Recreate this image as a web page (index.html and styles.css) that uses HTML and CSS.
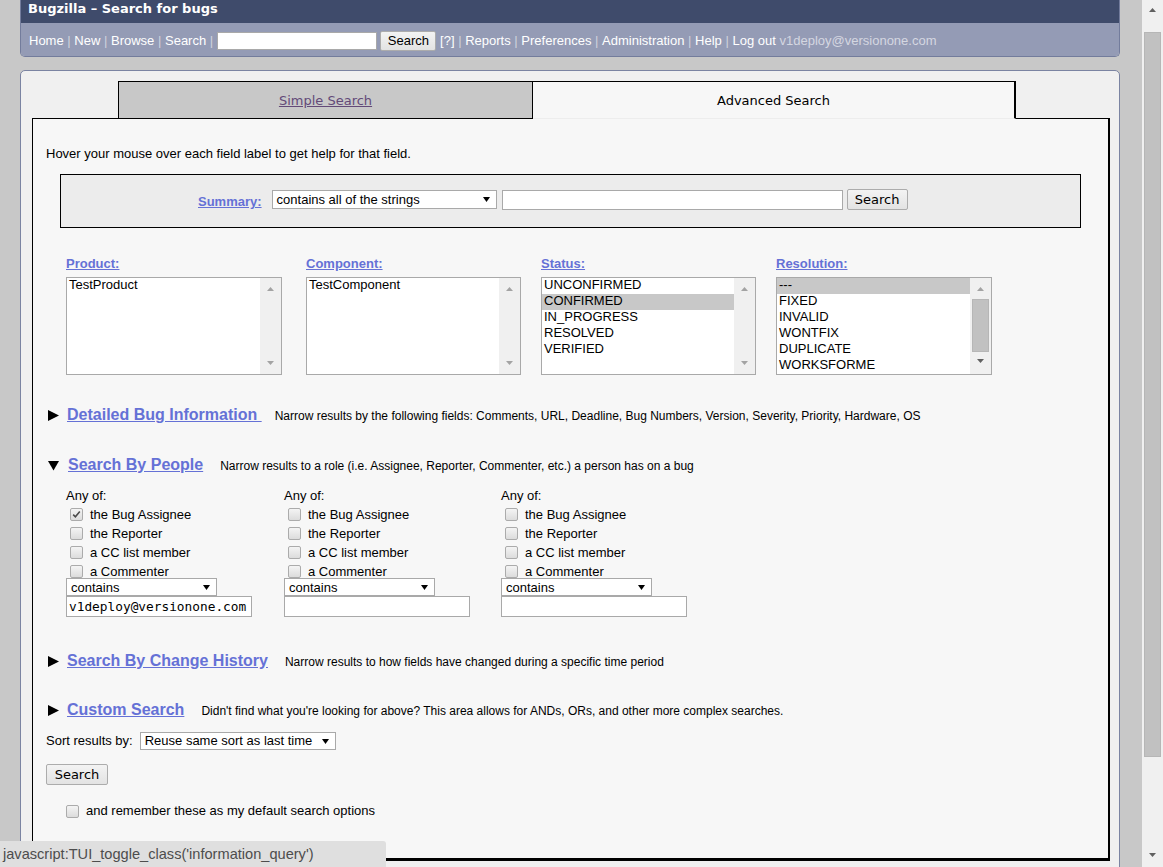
FILE: index.html
```html
<!DOCTYPE html>
<html lang="en">
<head>
<meta charset="utf-8">
<title>Bugzilla – Search for bugs</title>
<link rel="stylesheet" href="styles.css">
</head>
<body>
<div class="page">
  <div class="header">
    <div class="title">Bugzilla – Search for bugs</div>
    <div class="nav">
      <a class="nl">Home</a> <span class="sep">|</span> <a class="nl">New</a> <span class="sep">|</span> <a class="nl">Browse</a> <span class="sep">|</span> <a class="nl">Search</a> <span class="sep">|</span> <span class="nav-input"></span> <span class="btn nav-btn">Search</span> <a class="nl">[?]</a> <span class="sep">|</span> <a class="nl">Reports</a> <span class="sep">|</span> <a class="nl">Preferences</a> <span class="sep">|</span> <a class="nl">Administration</a> <span class="sep">|</span> <a class="nl">Help</a> <span class="sep">|</span> <a class="nl">Log out</a> <span class="email">v1deploy@versionone.com</span>
    </div>
  </div>

  <div class="panel">
    <div class="tabs">
      <div class="tab tab-simple"><a class="tab-link">Simple Search</a></div>
      <div class="tab tab-adv">Advanced Search</div>
    </div>
    <div class="content">
      <p class="intro">Hover your mouse over each field label to get help for that field.</p>

      <div class="summary-box">
        <a class="field-label">Summary:</a>
        <span class="select sel-summary">contains all of the strings<svg class="sel-arrow" width="7" height="5" viewBox="0 0 7 5"><path d="M0 0H7L3.5 5Z"/></svg></span>
        <span class="textbox tb-summary"></span>
        <span class="btn btn-v btn-summary">Search</span>
      </div>

      <div class="lists">
        <div class="list-col">
          <a class="field-label">Product:</a>
          <div class="listbox">
            <div class="options"><div class="opt">TestProduct</div></div>
            <div class="lsb">
              <svg class="lsb-arrow dis" width="7" height="4" viewBox="0 0 7 4"><path d="M0 4L3.5 0L7 4Z"/></svg>
              <svg class="lsb-arrow dis" width="7" height="4" viewBox="0 0 7 4"><path d="M0 0H7L3.5 4Z"/></svg>
            </div>
          </div>
        </div>
        <div class="list-col">
          <a class="field-label">Component:</a>
          <div class="listbox">
            <div class="options"><div class="opt">TestComponent</div></div>
            <div class="lsb">
              <svg class="lsb-arrow dis" width="7" height="4" viewBox="0 0 7 4"><path d="M0 4L3.5 0L7 4Z"/></svg>
              <svg class="lsb-arrow dis" width="7" height="4" viewBox="0 0 7 4"><path d="M0 0H7L3.5 4Z"/></svg>
            </div>
          </div>
        </div>
        <div class="list-col">
          <a class="field-label">Status:</a>
          <div class="listbox">
            <div class="options">
              <div class="opt">UNCONFIRMED</div>
              <div class="opt sel">CONFIRMED</div>
              <div class="opt">IN_PROGRESS</div>
              <div class="opt">RESOLVED</div>
              <div class="opt">VERIFIED</div>
            </div>
            <div class="lsb">
              <svg class="lsb-arrow dis" width="7" height="4" viewBox="0 0 7 4"><path d="M0 4L3.5 0L7 4Z"/></svg>
              <svg class="lsb-arrow dis" width="7" height="4" viewBox="0 0 7 4"><path d="M0 0H7L3.5 4Z"/></svg>
            </div>
          </div>
        </div>
        <div class="list-col">
          <a class="field-label">Resolution:</a>
          <div class="listbox">
            <div class="options">
              <div class="opt sel">---</div>
              <div class="opt">FIXED</div>
              <div class="opt">INVALID</div>
              <div class="opt">WONTFIX</div>
              <div class="opt">DUPLICATE</div>
              <div class="opt">WORKSFORME</div>
            </div>
            <div class="lsb lsb-active">
              <svg class="lsb-arrow dis" width="7" height="4" viewBox="0 0 7 4"><path d="M0 4L3.5 0L7 4Z"/></svg>
              <div class="lsb-thumb"></div>
              <svg class="lsb-arrow" width="7" height="4" viewBox="0 0 7 4"><path d="M0 0H7L3.5 4Z"/></svg>
            </div>
          </div>
        </div>
      </div>

      <div class="sec sec-detail">
        <svg class="tri" width="11" height="11" viewBox="0 0 11 11"><path d="M0 0L11 5.5L0 11Z"/></svg><a class="sec-link">Detailed Bug Information&nbsp;</a><span class="sec-desc d13">Narrow results by the following fields: Comments, URL, Deadline, Bug Numbers, Version, Severity, Priority, Hardware, OS</span>
      </div>

      <div class="sec sec-people">
        <svg class="tri tri-down" width="11" height="10" viewBox="0 0 11 10"><path d="M0 0H11L5.5 9.5Z"/></svg><a class="sec-link">Search By People</a><span class="sec-desc">Narrow results to a role (i.e. Assignee, Reporter, Commenter, etc.) a person has on a bug</span>
      </div>

      <div class="people">
        <div class="pcol">
          <div class="anyof">Any of:</div>
          <div class="cbrow"><span class="cb checked"><svg width="9" height="9" viewBox="0 0 9 9"><path d="M1.2 4.6L3.4 6.8L7.8 1.6" fill="none" stroke="#4a4a4a" stroke-width="1.6"/></svg></span>the Bug Assignee</div>
          <div class="cbrow"><span class="cb"></span>the Reporter</div>
          <div class="cbrow"><span class="cb"></span>a CC list member</div>
          <div class="cbrow"><span class="cb"></span>a Commenter</div>
          <span class="select sel-contains">contains<svg class="sel-arrow" width="7" height="5" viewBox="0 0 7 5"><path d="M0 0H7L3.5 5Z"/></svg></span>
          <span class="textbox tb-email">v1deploy@versionone.com</span>
        </div>
        <div class="pcol">
          <div class="anyof">Any of:</div>
          <div class="cbrow"><span class="cb"></span>the Bug Assignee</div>
          <div class="cbrow"><span class="cb"></span>the Reporter</div>
          <div class="cbrow"><span class="cb"></span>a CC list member</div>
          <div class="cbrow"><span class="cb"></span>a Commenter</div>
          <span class="select sel-contains">contains<svg class="sel-arrow" width="7" height="5" viewBox="0 0 7 5"><path d="M0 0H7L3.5 5Z"/></svg></span>
          <span class="textbox tb-email"></span>
        </div>
        <div class="pcol">
          <div class="anyof">Any of:</div>
          <div class="cbrow"><span class="cb"></span>the Bug Assignee</div>
          <div class="cbrow"><span class="cb"></span>the Reporter</div>
          <div class="cbrow"><span class="cb"></span>a CC list member</div>
          <div class="cbrow"><span class="cb"></span>a Commenter</div>
          <span class="select sel-contains">contains<svg class="sel-arrow" width="7" height="5" viewBox="0 0 7 5"><path d="M0 0H7L3.5 5Z"/></svg></span>
          <span class="textbox tb-email"></span>
        </div>
      </div>

      <div class="sec sec-history">
        <svg class="tri" width="11" height="11" viewBox="0 0 11 11"><path d="M0 0L11 5.5L0 11Z"/></svg><a class="sec-link">Search By Change History</a><span class="sec-desc">Narrow results to how fields have changed during a specific time period</span>
      </div>

      <div class="sec sec-custom">
        <svg class="tri" width="11" height="11" viewBox="0 0 11 11"><path d="M0 0L11 5.5L0 11Z"/></svg><a class="sec-link">Custom Search</a><span class="sec-desc">Didn't find what you're looking for above? This area allows for ANDs, ORs, and other more complex searches.</span>
      </div>

      <div class="sort-row">
        <span>Sort results by:</span>
        <span class="select sel-sort">Reuse same sort as last time<svg class="sel-arrow" width="7" height="5" viewBox="0 0 7 5"><path d="M0 0H7L3.5 5Z"/></svg></span>
      </div>

      <div class="submit-row"><span class="btn btn-v btn-bottom">Search</span></div>

      <div class="remember"><span class="cb"></span>and remember these as my default search options</div>
    </div>
  </div>
</div>

<div class="scrollbar">
  <svg class="sb-arrow" width="7" height="4" viewBox="0 0 7 4"><path d="M0 4L3.5 0L7 4Z"/></svg>
  <div class="sb-thumb"></div>
  <div class="sb-rest"></div>
  <svg class="sb-arrow" width="7" height="4" viewBox="0 0 7 4"><path d="M0 0H7L3.5 4Z"/></svg>
</div>

<div class="statusbar">javascript:TUI_toggle_class('information_query')</div>
</body>
</html>
```

FILE: styles.css
```css
* { box-sizing: border-box; }
html, body { margin: 0; height: 100%; }
body {
  display: flex;
  background: #c8c8c8;
  overflow: hidden;
  font-family: "Liberation Sans", Arial, sans-serif;
  font-size: 13px;
  color: #000;
}
.page { flex: 1; min-width: 0; padding: 0 22px 0 20px; }

/* header */
.header {
  border: 1px solid #737c9c;
  border-top: 0;
  border-radius: 0 0 5px 5px;
  overflow: hidden;
}
.title {
  height: 23px;
  background: #3f4b6b;
  color: #fff;
  font: bold 13px/18px "DejaVu Sans", sans-serif;
  padding-left: 7px;
}
.nav {
  height: 33px;
  background: #949bb5;
  padding: 7px 0 0 8px;
  line-height: 20px;
  white-space: nowrap;
  color: #fff;
}
.nav > * { vertical-align: middle; }
.nl { color: #fff; }
.sep { color: #cfd3de; }
.email { color: #d4d7e1; }
.nav-input {
  display: inline-block;
  width: 160px;
  height: 18px;
  background: #fff;
  border: 1px solid #a9a9a9;
}
.btn {
  display: inline-flex;
  align-items: center;
  justify-content: center;
  border: 1px solid #acacac;
  border-radius: 2px;
  background: linear-gradient(#f3f3f3, #e3e3e3);
  color: #000;
  white-space: nowrap;
}
.nav-btn { width: 56px; height: 20px; }
.btn-v { font-family: "DejaVu Sans", sans-serif; font-size: 13px; width: 62px; height: 21px; }

/* panel */
.panel {
  margin-top: 13px;
  border: 1px solid #7b84a2;
  border-radius: 5px 5px 0 0;
  background: #f0f0f0;
  padding: 10px 9px 20px 11px;
}
.tabs { display: flex; margin-left: 86px; }
.tab {
  height: 37px;
  display: flex;
  align-items: center;
  justify-content: center;
  font-family: "DejaVu Sans", sans-serif;
  font-size: 13px;
  border-top: 1px solid #000;
}
.tab-simple {
  width: 415px;
  background: #c8c8c8;
  border-left: 1px solid #000;
  border-right: 1px solid #000;
}
.tab-link { color: #634a78; text-decoration: underline; }
.tab-adv {
  width: 483px;
  height: 38px;
  margin-bottom: -1px;
  position: relative;
  z-index: 1;
  background: #f7f7f7;
  border-right: 2px solid #000;
  border-bottom: 1px solid #ededed;
}
.content {
  height: 743px;
  background: #f7f7f7;
  border-top: 1px solid #000;
  border-left: 1px solid #000;
  border-right: 2px solid #000;
  border-bottom: 3px solid #000;
  padding: 27px 0 0 13px;
}
.intro { margin: 0; line-height: 15px; }

.field-label {
  color: #6571d6;
  font-weight: bold;
  text-decoration: underline;
}

.summary-box {
  margin: 13px 27px 0 14px;
  height: 54px;
  border: 1px solid #000;
  background: #ececec;
  padding: 14px 0 0 137px;
  display: flex;
  align-items: flex-start;
}
.summary-box > * { flex: none; }
.summary-box .field-label { margin-right: 10px; line-height: 15px; margin-top: 5px; }

.select {
  position: relative;
  display: flex;
  align-items: center;
  height: 19px;
  background: #fff;
  border: 1px solid #a9a9a9;
  padding-left: 4px;
  white-space: nowrap;
}
.sel-arrow { position: absolute; right: 6px; top: 6px; }
.sel-summary { width: 225px; margin-top: 1px; }
.textbox {
  display: block;
  height: 20px;
  background: #fff;
  border: 1px solid #a9a9a9;
}
.tb-summary { width: 341px; margin-left: 5px; margin-top: 1px; }
.btn-summary { margin-left: 4px; width: 61px; }

/* listboxes */
.lists {
  margin: 28px 0 0 20px;
  display: grid;
  grid-template-columns: 240px 235px 235px 216px;
}
.list-col .field-label { display: block; width: max-content; line-height: 15px; margin-bottom: 6px; }
.listbox {
  display: flex;
  width: 216px;
  height: 98px;
  background: #fff;
  border: 1px solid #a9a9a9;
}
.list-col:nth-child(2) .listbox, .list-col:nth-child(3) .listbox { width: 215px; }
.options { flex: 1; }
.opt { height: 16px; line-height: 14px; padding-left: 2px; }
.opt.sel { background: #c8c8c8; }
.lsb {
  width: 21px;
  background: #f0f0f0;
  display: flex;
  flex-direction: column;
  align-items: center;
  justify-content: space-between;
  padding: 9px 0 9px;
}
.lsb-arrow { fill: #a3a3a3; display: block; }
.lsb-active .lsb-arrow { fill: #606060; }
.lsb-active .lsb-arrow.dis { fill: #a3a3a3; }
.lsb-active { justify-content: flex-start; padding: 9px 0 0; }
.lsb-thumb {
  width: 17px;
  height: 53px;
  margin-top: 8px;
  background: #c1c1c1;
  margin-bottom: 7px;
  border: 1px solid #b6b6b6;
}

/* sections */
.sec { line-height: 19px; white-space: nowrap; }
.sec-detail { margin-top: 30px; }
.sec-people { margin-top: 29px; }
.sec-history { margin-top: 34px; }
.sec-custom { margin-top: 28px; }
.tri { display: inline-block; margin: 0 8px 0 2px; vertical-align: -1px; }
.tri-down { margin-right: 9px; }
.sec-link {
  font-size: 16px;
  font-weight: bold;
  color: #6571d6;
  text-decoration: underline;
}
.sec-desc { font-size: 12px; margin-left: 17px; }
.sec-desc.d13 { margin-left: 13px; }

/* people */
.people {
  margin: 12px 0 0 20px;
  display: grid;
  grid-template-columns: 218px 217px 217px;
}
.pcol { display: flex; flex-direction: column; align-items: flex-start; }
.anyof { line-height: 16px; height: 17px; }
.cbrow { height: 19px; line-height: 19px; display: flex; align-items: center; }
.cb {
  display: inline-flex;
  align-items: center;
  justify-content: center;
  width: 13px;
  height: 13px;
  border: 1px solid #ababab;
  border-radius: 2px;
  background: linear-gradient(#f4f4f4, #dcdcdc);
  flex: none;
}
.cbrow .cb { margin: 0 7px 0 4px; }
.sel-contains { width: 151px; height: 18px; margin-top: -3px; }
.tb-email {
  width: 186px;
  height: 21px;
  font: 12.8px/19px "DejaVu Sans Mono", monospace;
  padding-left: 2px;
}

/* bottom */
.sort-row { margin-top: 10px; display: flex; align-items: center; height: 19px; }
.sel-sort { width: 196px; margin-left: 7px; height: 18px; }
.submit-row { margin-top: 14px; }
.remember { margin: 18px 0 0 20px; display: flex; align-items: center; line-height: 16px; }
.remember .cb { margin-right: 7px; }

/* page scrollbar */
.scrollbar {
  width: 21px;
  flex: none;
  background: #f0f0f0;
  display: flex;
  flex-direction: column;
  align-items: center;
  padding: 8px 0 10px;
}
.sb-arrow { fill: #606060; display: block; flex: none; }
.sb-thumb {
  width: 17px;
  height: 725px;
  margin-top: 20px;
  background: #c1c1c1;
  border: 1px solid #b6b6b6;
  flex: none;
}
.sb-rest { flex: 1; }

/* status bar overlay */
.statusbar {
  position: fixed;
  left: 0;
  bottom: 0;
  width: 386px;
  height: 26px;
  background: #dfdfdf;
  border-top-right-radius: 3px;
  color: #4d4d4d;
  font-size: 14.6px;
  line-height: 26px;
  padding-left: 3px;
  white-space: nowrap;
}
```
